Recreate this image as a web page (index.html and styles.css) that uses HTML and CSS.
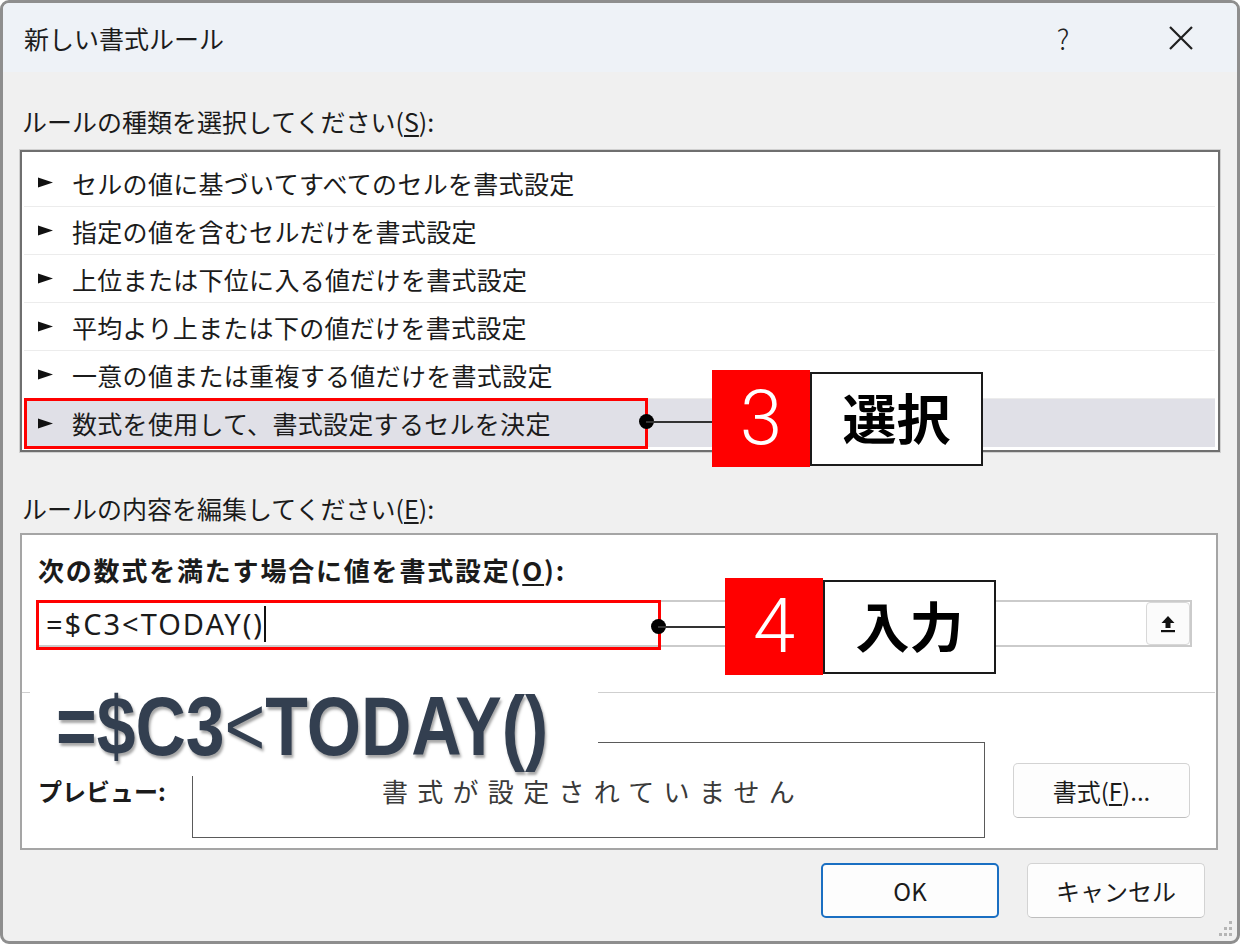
FILE: index.html
```html
<!DOCTYPE html>
<html lang="ja">
<head>
  <meta charset="UTF-8" />
  <title>新しい書式ルール</title>
  <link rel="stylesheet" href="styles.css">
</head>
<body>
  <div class="window">
    <header class="titlebar">
      <span class="title">新しい書式ルール</span>
      <span class="help">?</span>
      <span class="close">
        <svg width="26" height="26" viewBox="0 0 26 26"><path d="M2 2 L24 24 M24 2 L2 24" stroke="#1f1f1f" stroke-width="2.2" fill="none"/></svg>
      </span>
    </header>
    <div class="dialog-body">
      <div class="label">ルールの種類を選択してください(<u>S</u>):</div>
      <ul class="rule-list">
        <li><span class="arrow"><svg width="15" height="11" viewBox="0 0 15 11"><path d="M0 0.5 L15 5.5 L0 10.5 Z" fill="#111"/></svg></span>セルの値に基づいてすべてのセルを書式設定</li>
        <li><span class="arrow"><svg width="15" height="11" viewBox="0 0 15 11"><path d="M0 0.5 L15 5.5 L0 10.5 Z" fill="#111"/></svg></span>指定の値を含むセルだけを書式設定</li>
        <li><span class="arrow"><svg width="15" height="11" viewBox="0 0 15 11"><path d="M0 0.5 L15 5.5 L0 10.5 Z" fill="#111"/></svg></span>上位または下位に入る値だけを書式設定</li>
        <li><span class="arrow"><svg width="15" height="11" viewBox="0 0 15 11"><path d="M0 0.5 L15 5.5 L0 10.5 Z" fill="#111"/></svg></span>平均より上または下の値だけを書式設定</li>
        <li><span class="arrow"><svg width="15" height="11" viewBox="0 0 15 11"><path d="M0 0.5 L15 5.5 L0 10.5 Z" fill="#111"/></svg></span>一意の値または重複する値だけを書式設定</li>
        <li class="selected"><span class="arrow"><svg width="15" height="11" viewBox="0 0 15 11"><path d="M0 0.5 L15 5.5 L0 10.5 Z" fill="#111"/></svg></span>数式を使用して、書式設定するセルを決定</li>
      </ul>

      <div class="label label-edit">ルールの内容を編集してください(<u>E</u>):</div>
      <div class="edit-frame">
        <div class="edit-title">次の数式を満たす場合に値を書式設定(<u>O</u>):</div>
        <div class="formula-input">
          <span class="formula-text">=$C3&lt;TODAY()</span><span class="caret"></span>
          <button class="ref-btn" type="button" title="折りたたみ">
            <svg width="18" height="20" viewBox="0 0 18 20"><path d="M9 2 L15.5 9 H11.5 V14 H6.5 V9 H2.5 Z" fill="#111"/><rect x="2" y="16" width="14" height="2.2" fill="#111"/></svg>
          </button>
        </div>
        <hr class="sep">
        <div class="preview-row">
          <span class="preview-label">プレビュー:</span>
          <div class="preview-box">書式が設定されていません</div>
          <button class="btn fmt-btn" type="button">書式(<u>F</u>)...</button>
        </div>
      </div>

      <div class="footer">
        <button class="btn ok" type="button">OK</button>
        <button class="btn" type="button">キャンセル</button>
      </div>
    </div>
  </div>

  <!-- annotations drawn over the dialog -->
  <div class="mark mark-rule"></div>
  <div class="dot dot-rule"></div>
  <div class="leader leader-rule"></div>
  <div class="step step-3"><span class="step-num">3</span><span class="step-text">選択</span></div>

  <div class="mark mark-input"></div>
  <div class="dot dot-input"></div>
  <div class="leader leader-input"></div>
  <div class="step step-4"><span class="step-num">4</span><span class="step-text">入力</span></div>

  <div class="big-formula"><span class="big-formula-text">=$C3<span class="thin">&lt;</span>TODAY()</span></div>

  <svg class="grip" width="20" height="20" viewBox="0 0 20 20">
    <rect x="15" y="3" width="3" height="3" fill="#b5b5b5"/>
    <rect x="10" y="9" width="3" height="3" fill="#b5b5b5"/>
    <rect x="15" y="9" width="3" height="3" fill="#b5b5b5"/>
    <rect x="5" y="15" width="3" height="3" fill="#b5b5b5"/>
    <rect x="10" y="15" width="3" height="3" fill="#b5b5b5"/>
    <rect x="15" y="15" width="3" height="3" fill="#b5b5b5"/>
  </svg>
</body>
</html>
```

FILE: styles.css
```css
html, body {
  margin: 0;
  padding: 0;
}
body {
  width: 1240px;
  height: 944px;
  position: relative;
  overflow: hidden;
  background: #fff;
  font-family: "Noto Sans CJK JP", "Noto Sans", sans-serif;
  color: #1b1b1b;
}
u {
  text-underline-offset: 3px;
}
.window {
  box-sizing: border-box;
  width: 1240px;
  height: 944px;
  border: 3px solid #8e8e8e;
  border-radius: 9px;
  background: #f0f0f0;
  overflow: hidden;
  display: flex;
  flex-direction: column;
}
.titlebar {
  height: 69px;
  flex-shrink: 0;
  background: #eef2f7;
  display: flex;
  align-items: center;
  padding-left: 21px;
}
.title {
  flex: 1;
  font-size: 25px;
  color: #1c1c1c;
}
.help {
  width: 40px;
  text-align: center;
  font-size: 28px;
  font-weight: 300;
  margin-right: 74px;
  color: #222;
}
.close {
  width: 48px;
  margin-right: 32px;
  display: flex;
  justify-content: center;
}
.dialog-body {
  padding: 34px 17px 0 17px;
}
.label {
  font-size: 25px;
  line-height: 30px;
  padding-left: 2px;
  margin-bottom: 14px;
}
.rule-list {
  list-style: none;
  margin: 0;
  box-sizing: border-box;
  height: 302px;
  padding: 7px 3px 3px 2px;
  background: #fff;
  border: 2px solid #6f6f6f;
  box-shadow: 0 0 0 1px #d0d0d0;
}
.rule-list li {
  box-sizing: border-box;
  height: 48px;
  display: flex;
  align-items: center;
  padding-left: 14px;
  font-size: 25px;
  letter-spacing: 0.3px;
  border-bottom: 1px solid #ececec;
}
.rule-list li.selected {
  background: #e0e0e7;
  border-bottom: none;
}
.arrow {
  width: 34px;
  display: flex;
  align-items: center;
}
.label-edit {
  margin-top: 41px;
  margin-bottom: 10px;
}
.edit-frame {
  box-sizing: border-box;
  height: 317px;
  margin-right: 2px;
  background: #fff;
  border: 2px solid #a5a5a5;
  padding: 20px 24px 0 14px;
}
.edit-title {
  font-size: 26px;
  font-weight: 700;
  letter-spacing: 1.8px;
  line-height: 30px;
  padding-left: 2px;
}
.formula-input {
  box-sizing: border-box;
  height: 47px;
  margin-top: 15px;
  border: 2px solid #cbcbcb;
  display: flex;
  align-items: center;
  padding-left: 8px;
}
.formula-text {
  font-family: "Noto Sans", "Noto Sans CJK JP", sans-serif;
  font-size: 29px;
  letter-spacing: 2px;
}
.caret {
  width: 2px;
  height: 36px;
  background: #111;
  margin-left: 0;
}
.ref-btn {
  margin-left: auto;
  width: 44px;
  height: 43px;
  padding: 0;
  border: 1px solid #d8d8d8;
  border-radius: 4px;
  background: #fbfbfb;
  display: flex;
  align-items: center;
  justify-content: center;
}
.sep {
  margin: 45px -23px 0 -14px;
  border: 0;
  border-top: 1px solid #cfcfcf;
  height: 0;
}
.preview-row {
  display: flex;
  align-items: center;
  margin-top: 49px;
}
.preview-label {
  box-sizing: border-box;
  width: 156px;
  padding-left: 2px;
  font-size: 24px;
  font-weight: 700;
}
.preview-box {
  box-sizing: border-box;
  width: 793px;
  height: 96px;
  border: 1px solid #5a5a5a;
  display: flex;
  align-items: center;
  justify-content: center;
  padding-left: 9px;
  font-size: 26px;
  letter-spacing: 9.3px;
  color: #3a3a3a;
}
.btn {
  box-sizing: border-box;
  width: 178px;
  height: 55px;
  padding: 0;
  background: #fdfdfd;
  border: 1px solid #d3d3d3;
  border-bottom-color: #bebebe;
  border-radius: 5px;
  font-family: inherit;
  font-size: 24px;
  color: #1b1b1b;
}
.btn.ok {
  border: 2px solid #1a6fc2;
}
.fmt-btn {
  width: 177px;
  margin-left: 28px;
}
.footer {
  display: flex;
  justify-content: flex-end;
  gap: 28px;
  margin-top: 13px;
  padding-right: 15px;
}
.grip {
  position: absolute;
  right: 6px;
  bottom: 6px;
}

/* annotations */
.mark {
  position: absolute;
  box-sizing: border-box;
  border: 3px solid #ff0000;
}
.mark-rule { left: 24px; top: 398px; width: 624px; height: 51px; }
.mark-input { left: 36px; top: 600px; width: 625px; height: 50px; }
.dot {
  position: absolute;
  width: 15px;
  height: 15px;
  border-radius: 50%;
  background: #000;
}
.dot-rule { left: 639px; top: 414px; }
.dot-input { left: 651px; top: 619px; }
.leader {
  position: absolute;
  height: 2px;
  background: #333;
}
.leader-rule { left: 646px; top: 421px; width: 66px; }
.leader-input { left: 658px; top: 626px; width: 67px; }
.step {
  position: absolute;
  display: flex;
  align-items: center;
}
.step-3 { left: 712px; top: 370px; }
.step-4 { left: 725px; top: 578px; }
.step-num {
  width: 98px;
  height: 97px;
  background: #ff0000;
  color: #fff;
  font-family: "Roboto", "Noto Sans", sans-serif;
  font-weight: 300;
  font-size: 76px;
  line-height: 97px;
  text-align: center;
}
.step-text {
  box-sizing: border-box;
  width: 173px;
  height: 94px;
  background: #fff;
  border: 2px solid #1a1a1a;
  font-size: 54px;
  font-weight: 700;
  color: #000;
  line-height: 86px;
  text-align: center;
}
.big-formula {
  position: absolute;
  left: 30px;
  top: 686px;
  width: 568px;
  height: 90px;
  box-sizing: border-box;
  padding-left: 26px;
  background: #fff;
}
.big-formula-text {
  display: inline-block;
  transform: scaleX(0.83);
  transform-origin: left center;
  font-family: "Liberation Sans", sans-serif;
  font-weight: 700;
  font-size: 84px;
  line-height: 80px;
  color: #333f50;
  text-shadow: 2px 3px 3px rgba(0, 0, 0, 0.35);
  white-space: nowrap;
}
.big-formula-text .thin {
  font-weight: 400;
}
```
